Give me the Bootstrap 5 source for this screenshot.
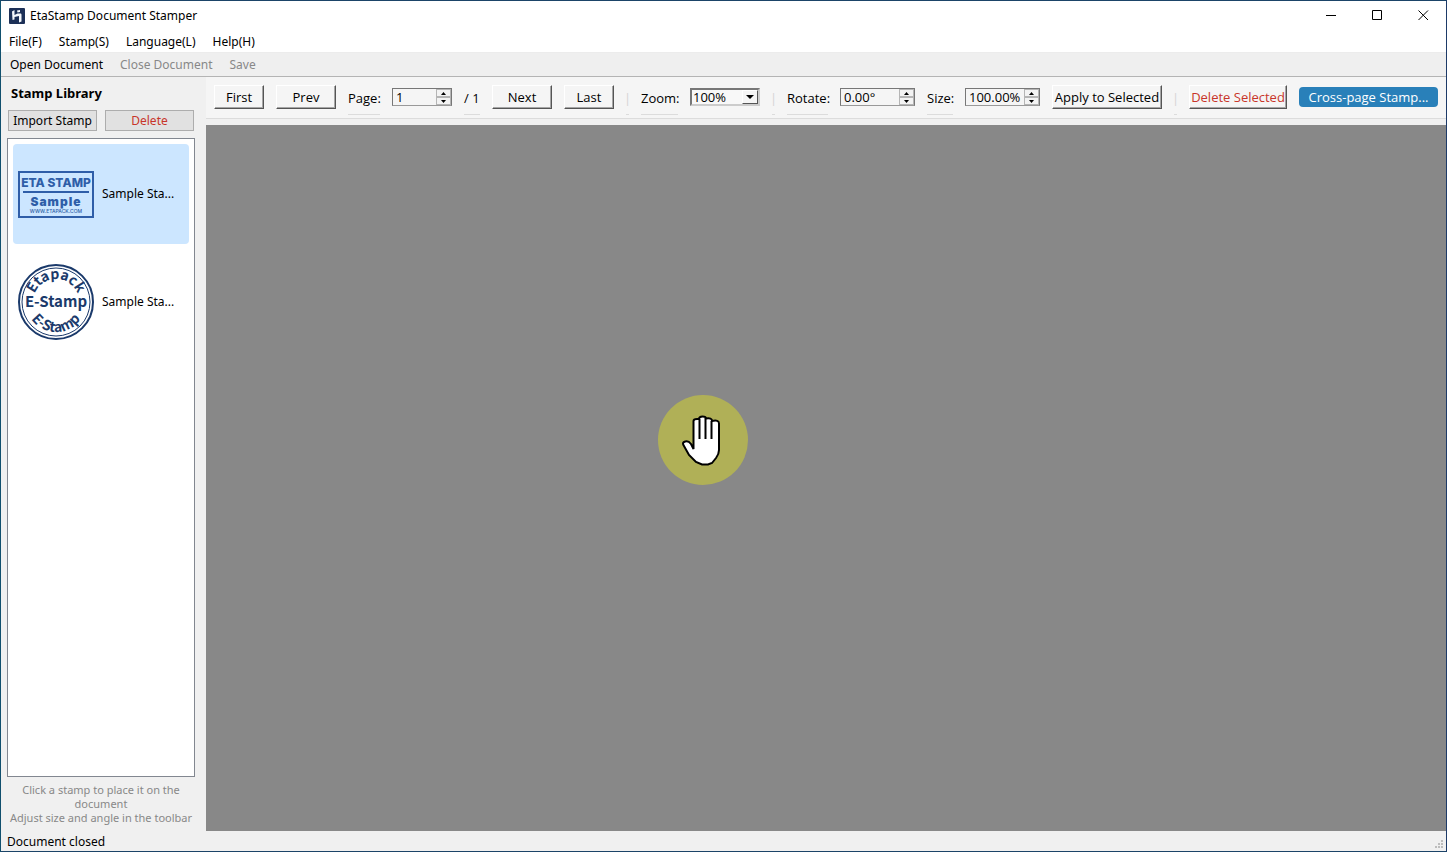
<!DOCTYPE html>
<html lang="en">
<head>
<meta charset="utf-8">
<meta name="viewport" content="width=device-width, initial-scale=1">
<title>EtaStamp Document Stamper</title>
<link href="https://cdn.jsdelivr.net/npm/bootstrap@5.3.0/dist/css/bootstrap.min.css" rel="stylesheet">
<style>
body { font: 12px/18px "Noto Sans", "Open Sans", sans-serif; color: #000; background: #f0f0f0; }
button, input, select { font: inherit; color: inherit; }
.app-window { border: 1px solid #1b4468; border-left-color: #11506e; border-right-color: #1d3a68; }
.titlebar { height: 29px; padding-left: 8px; }
.app-name { margin-left: 5px; }
.win-btn { width: 46px; height: 29px; background: none; }
.menubar { height: 23px; border-bottom: 1px solid #ececec; padding: 2px 0 0 8px; gap: 17px; }
.menubar a, .actions button { color: #000; text-decoration: none; }
.actions { height: 24px; background: #efefef; border-bottom: 1px solid #b4b4b4; padding-left: 9px; gap: 17px; }
.actions button { background: none; }
.actions button:disabled { color: #888; }
.sidebar { width: 205px; padding: 6px 11px 5px 6px; }
.lib-title { font-size: 13px; font-weight: 700; line-height: 20px; height: 27px; }
.lib-buttons { margin: 0 1px 7px; }
.flat-btn { height: 21px; background: #e1e1e1; border: 1px solid #adadad; line-height: 18px; }
.stamp-list { border: 1px solid #828790; background: #fff; padding: 5px; }
.stamp-item { height: 100px; margin-bottom: 8px; padding: 0 5px; border-radius: 4px; gap: 8px; background: #fff; }
.stamp-item.chosen { background: #cce6ff; }
.hint { color: #888; font-size: 11px; line-height: 14px; padding-top: 6px; padding-bottom: 1px; }
.controls { font: 13px/18px "Open Sans", "Noto Sans", sans-serif; height: 42px; background: #f5f5f5; border-bottom: 1px solid #dcdcdc; padding: 0 8px 1px; gap: 12px; }
.raised { height: 24px; background: #f5f5f5; border: 1px solid; border-color: #fff #555 #555 #fff; box-shadow: inset -1px -1px #a6a6a6; line-height: 20px; }
.caption { height: 36px; line-height: 38px; border-bottom: 1px solid #dcdcdc; }
.bar { color: #d4d4d4; width: 3px; }
.w26 { width: 26px; } .w32 { width: 32px; } .w16 { width: 16px; } .w37 { width: 37px; } .w41 { width: 41px; }
.w50 { width: 50px; } .w60 { width: 60px; } .w70 { width: 70px; } .w75 { width: 75px; }
.w98 { width: 98px; } .w110 { width: 110px; }
.spin { height: 18px; border: 1px solid #777; border-bottom-color: #999; background: #f5f5f5; }
.spin input { min-width: 0; background: none; padding: 0 0 0 3px; line-height: 16px; }
.spin .steps { width: 15px; }
.steps button { background: #f3f3f3; border: 1px solid #b5b5b5; line-height: 1; }
.zoom-box { height: 18px; border: 2px solid; border-color: #777 #ccc #ccc #777; background: #f8f8f8; }
.zoom-box select { appearance: none; background: none; line-height: 14px; padding: 0 0 0 1px; }
.drop { width: 16px; right: 0; top: 0; pointer-events: none; background: #f5f5f5; border: 1px solid; border-color: #fff #555 #555 #fff; }
.cross { height: 20px; width: 139px; background: #2980b9; color: #fff; border-radius: 4px; line-height: 18px; }
.red { color: #c8352a; }
.canvas { background: #888; margin-top: 6px; }
.hand { left: 36.45%; top: 270px; }
.status { height: 20px; padding-left: 6px; }
.status span { line-height: 19px; }
</style>
<script src="https://cdn.jsdelivr.net/npm/bootstrap@5.3.0/dist/js/bootstrap.bundle.min.js" defer></script>
</head>
<body>
<div class="app-window vh-100 d-flex flex-column overflow-hidden">
  <header class="bg-white">
    <div class="titlebar d-flex align-items-center">
      <svg width="16" height="16" viewBox="0 0 16 16" aria-hidden="true"><rect width="16" height="16" rx="1" fill="#1c3057"/><path d="M3 3.500L5.500 2v9.500L3.500 12zM5.500 7l3-1.500h3.500l.5 1V13.500L10 14.500V8L5.500 9zM8 2.500l3-.5v2L8.500 4.500z" fill="#f4f7fb"/></svg>
      <span class="app-name me-auto">EtaStamp Document Stamper</span>
      <button class="win-btn border-0 p-0" aria-label="Minimize"><svg width="11" height="11" class="d-block mx-auto"><path d="M0 5.500h10" stroke="#000"/></svg></button>
      <button class="win-btn border-0 p-0" aria-label="Maximize"><svg width="11" height="11" class="d-block mx-auto"><path d="M.5.500h9v9h-9z" fill="none" stroke="#000"/></svg></button>
      <button class="win-btn border-0 p-0" aria-label="Close"><svg width="11" height="11" class="d-block mx-auto"><path d="M.5.500l9.500 9.500M10 .500l-9.500 9.500" stroke="#000"/></svg></button>
    </div>
    <nav class="menubar d-flex align-items-center">
      <a href="#">File(F)</a><a href="#">Stamp(S)</a><a href="#">Language(L)</a><a href="#">Help(H)</a>
    </nav>
  </header>
  <div class="actions d-flex align-items-center flex-shrink-0">
    <button class="border-0 p-0">Open Document</button>
    <button class="border-0 p-0" disabled>Close Document</button>
    <button class="border-0 p-0" disabled>Save</button>
  </div>
  <div class="d-flex flex-grow-1 overflow-hidden">
    <aside class="sidebar d-flex flex-column flex-shrink-0">
      <h1 class="lib-title mb-0 ps-1">Stamp Library</h1>
      <div class="d-flex gap-2 lib-buttons">
        <button class="flat-btn p-0 w-50 text-nowrap">Import Stamp</button>
        <button class="flat-btn p-0 w-50 red">Delete</button>
      </div>
      <div class="stamp-list flex-grow-1">
        <button class="stamp-item chosen border-0 d-flex align-items-center w-100">
          <svg width="76" height="76" viewBox="0 0 76 76" class="flex-shrink-0" fill="#2f5ea8" font-family="Inter, sans-serif" text-anchor="middle">
            <rect x="1" y="16" width="74" height="45" fill="none" stroke="#2f5ea8" stroke-width="2"/>
            <text x="38" y="31" font-size="12" font-weight="800">ETA STAMP</text>
            <path d="M5 36h66" stroke="#2f5ea8" stroke-width="2"/>
            <text x="38" y="50" font-size="12" font-weight="900" letter-spacing="1">Sample</text>
            <text x="38" y="57" font-size="5" font-weight="500">WWW.ETAPACK.COM</text>
          </svg>
          <span class="text-nowrap">Sample Sta...</span>
        </button>
        <button class="stamp-item border-0 d-flex align-items-center w-100">
          <svg width="76" height="76" viewBox="0 0 76 76" class="flex-shrink-0" fill="#1b3a6b" font-family="'Noto Sans CJK SC', sans-serif" font-weight="700" text-anchor="middle">
            <circle cx="38" cy="38" r="37" fill="none" stroke="#1b3a6b" stroke-width="2"/>
            <circle cx="38" cy="38" r="34" fill="none" stroke="#1b3a6b" stroke-width="1"/>
            <path id="upper" d="M15 38a23 23 0 0 1 46 0" fill="none"/>
            <path id="lower" d="M8 38a30 30 0 0 0 60 0" fill="none"/>
            <text font-size="14"><textPath href="#upper" startOffset="50%">Etapack</textPath></text>
            <text x="38" y="43" font-size="15">E-Stamp</text>
            <text font-size="14"><textPath href="#lower" startOffset="50%">E-Stamp</textPath></text>
          </svg>
          <span class="text-nowrap">Sample Sta...</span>
        </button>
      </div>
      <p class="hint text-center mb-0">Click a stamp to place it on the document<br>Adjust size and angle in the toolbar</p>
    </aside>
    <main class="d-flex flex-column flex-grow-1 overflow-hidden">
      <div class="controls d-flex align-items-center flex-shrink-0 text-nowrap">
        <button class="raised w50 p-0">First</button>
        <button class="raised w60 p-0">Prev</button>
        <label class="caption w32" for="page">Page:</label>
        <div class="spin w60 d-flex"><input id="page" class="border-0 w-100" value="1"><div class="steps d-flex flex-column flex-shrink-0"><button class="p-0 h-50 d-flex justify-content-center align-items-center" aria-label="Next page"><svg width="5" height="3"><path d="M0 3h5L2.500 0z"/></svg></button><button class="p-0 h-50 d-flex justify-content-center align-items-center" aria-label="Previous page"><svg width="5" height="3"><path d="M0 0h5L2.500 3z"/></svg></button></div></div>
        <span class="caption w16">/ 1</span>
        <button class="raised w60 p-0">Next</button>
        <button class="raised w50 p-0">Last</button>
        <span class="caption bar d-flex justify-content-center">|</span>
        <label class="caption w37" for="zoom">Zoom:</label>
        <div class="zoom-box w70 position-relative"><select id="zoom" class="border-0 w-100 h-100 d-block"><option>100%</option></select><span class="drop position-absolute h-100 d-flex justify-content-center align-items-center"><svg width="8" height="4"><path d="M0 0h8L4 4z"/></svg></span></div>
        <span class="caption bar d-flex justify-content-center">|</span>
        <label class="caption w41" for="rotate">Rotate:</label>
        <div class="spin w75 d-flex"><input id="rotate" class="border-0 w-100" value="0.00°"><div class="steps d-flex flex-column flex-shrink-0"><button class="p-0 h-50 d-flex justify-content-center align-items-center" aria-label="Rotate more"><svg width="5" height="3"><path d="M0 3h5L2.500 0z"/></svg></button><button class="p-0 h-50 d-flex justify-content-center align-items-center" aria-label="Rotate less"><svg width="5" height="3"><path d="M0 0h5L2.500 3z"/></svg></button></div></div>
        <label class="caption w26" for="size">Size:</label>
        <div class="spin w75 d-flex"><input id="size" class="border-0 w-100" value="100.00%"><div class="steps d-flex flex-column flex-shrink-0"><button class="p-0 h-50 d-flex justify-content-center align-items-center" aria-label="Larger"><svg width="5" height="3"><path d="M0 3h5L2.500 0z"/></svg></button><button class="p-0 h-50 d-flex justify-content-center align-items-center" aria-label="Smaller"><svg width="5" height="3"><path d="M0 0h5L2.500 3z"/></svg></button></div></div>
        <button class="raised w110 p-0">Apply to Selected</button>
        <span class="caption bar d-flex justify-content-center">|</span>
        <button class="raised w98 p-0 red">Delete Selected</button>
        <button class="cross border-0 p-0">Cross-page Stamp...</button>
      </div>
      <div class="canvas flex-grow-1 position-relative">
        <svg class="hand position-absolute" width="90" height="90" viewBox="0 0 90 90" role="img" aria-label="Hand cursor"><circle cx="45" cy="45" r="45" fill="#b0b057"/><path d="M35.500 54V26q0-2 3.500-2h2q0-2.500 3.500-2.500T48 23.500q6-1 6 2.500 7-1.500 7 2.500V55q0 4-3 8l-4 5-4 1.500h-6L38 67l-7-7-5-9q-2-3 0-4 4-2 7 2z" fill="#fff" stroke="#000" stroke-width="2"/><path d="M41.500 24v20M47.500 23v21M53.500 26v18" stroke="#000" stroke-width="2"/></svg>
      </div>
    </main>
  </div>
  <footer class="status d-flex justify-content-between align-items-end flex-shrink-0">
    <span>Document closed</span>
    <svg width="11" height="11" fill="#bdbdbd" aria-hidden="true"><path d="M6 0h2v2h-2zM3 3h2v2h-2zM6 3h2v2h-2zM0 6h2v2h-2zM3 6h2v2h-2zM6 6h2v2h-2z"/></svg>
  </footer>
</div>
</body>
</html>
